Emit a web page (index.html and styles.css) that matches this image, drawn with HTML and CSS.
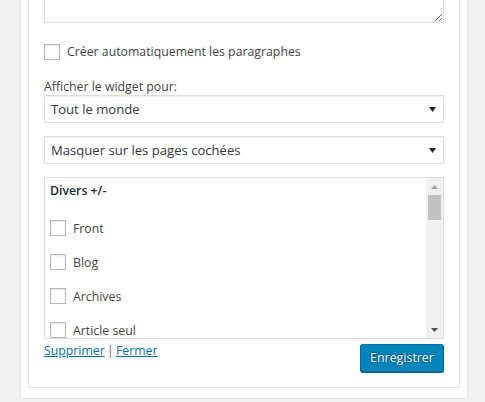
FILE: index.html
```html
<!DOCTYPE html>
<html lang="fr">
<head>
<meta charset="utf-8">
<title>Widget</title>
<link rel="stylesheet" href="styles.css">
</head>
<body>
<div class="page">
  <div class="widget">
    <div class="inside">
      <textarea class="content-area"></textarea>
      <label class="check-row">
        <span class="checkbox"></span>
        <span class="check-label">Créer automatiquement les paragraphes</span>
      </label>
      <div class="field-label">Afficher le widget pour:</div>
      <div class="select">
        <span>Tout le monde</span>
        <svg class="arrow" width="7" height="5" viewBox="0 0 7 5"><polygon points="0,0 7,0 3.5,5" fill="#222"/></svg>
      </div>
      <div class="select select-gap">
        <span>Masquer sur les pages cochées</span>
        <svg class="arrow" width="7" height="5" viewBox="0 0 7 5"><polygon points="0,0 7,0 3.5,5" fill="#222"/></svg>
      </div>
      <div class="list">
        <div class="list-body">
          <div class="list-heading">Divers +/-</div>
          <label class="list-item"><span class="checkbox"></span><span>Front</span></label>
          <label class="list-item"><span class="checkbox"></span><span>Blog</span></label>
          <label class="list-item"><span class="checkbox"></span><span>Archives</span></label>
          <label class="list-item"><span class="checkbox"></span><span>Article seul</span></label>
        </div>
        <div class="scrollbar">
          <div class="sb-button">
            <svg width="7" height="4" viewBox="0 0 7 4"><polygon points="0,4 7,4 3.5,0" fill="#a3a3a3"/></svg>
          </div>
          <div class="sb-track"><div class="sb-thumb"></div></div>
          <div class="sb-button">
            <svg width="7" height="4" viewBox="0 0 7 4"><polygon points="0,0 7,0 3.5,4" fill="#505050"/></svg>
          </div>
        </div>
      </div>
      <div class="actions">
        <div class="links"><a href="#">Supprimer</a> <span class="sep">|</span> <a href="#">Fermer</a></div>
        <button class="button-primary" type="button">Enregistrer</button>
      </div>
    </div>
  </div>
</div>
</body>
</html>
```

FILE: styles.css
```css
* { box-sizing: border-box; }

html, body {
  margin: 0;
  padding: 0;
  background: #f1f1f1;
}

body {
  font-family: "Open Sans", "Noto Sans", sans-serif;
  font-size: 12.3px;
  color: #444;
  overflow: hidden;
}

.page {
  padding: 0 17px 0 20px;
}

.widget {
  width: 448px;
  margin-top: -60px;
  background: #fff;
  border: 1px solid #e5e5e5;
  box-shadow: 0 1px 1px rgba(0, 0, 0, 0.04);
  padding: 0 7px 10px;
}

.inside {
  border: 1px solid #e5e5e5;
  padding: 0 15px 15px;
}

.content-area {
  display: block;
  width: 400px;
  height: 81px;
  margin: 0;
  border: 1px solid #ddd;
  box-shadow: inset 0 1px 2px rgba(0, 0, 0, 0.07);
  resize: vertical;
  background: #fff;
}

.checkbox {
  display: inline-block;
  flex: none;
  width: 16px;
  height: 16px;
  border: 1px solid #b4b9be;
  background: #fff;
  box-shadow: inset 0 1px 2px rgba(0, 0, 0, 0.1);
}

.check-row {
  display: flex;
  align-items: center;
  gap: 7px;
  margin-top: 20px;
  line-height: 18px;
}

.field-label {
  margin-top: 17px;
  line-height: 17px;
}

.select {
  display: flex;
  align-items: center;
  justify-content: space-between;
  height: 28px;
  padding: 0 7px 0 6px;
  border: 1px solid #ddd;
  box-shadow: inset 0 1px 2px rgba(0, 0, 0, 0.07);
  background: #fff;
  color: #32373c;
  font-size: 13.1px;
}

.select-gap {
  margin-top: 13px;
}

.arrow {
  display: block;
  flex: none;
}

.list {
  display: flex;
  margin-top: 13px;
  height: 162px;
  border: 1px solid #ddd;
  background: #fff;
}

.list-body {
  flex: 1;
  overflow: hidden;
  padding: 4px 0 0 5px;
  display: flex;
  flex-direction: column;
  gap: 16px;
}

.list-heading {
  font-weight: 600;
  line-height: 18px;
  color: #23282d;
  margin-bottom: 3px;
}

.list-item {
  display: flex;
  flex: none;
  align-items: center;
  gap: 7px;
  height: 18px;
}

.scrollbar {
  width: 17px;
  flex: none;
  background: #f0f0f0;
  display: flex;
  flex-direction: column;
}

.sb-button {
  height: 17px;
  flex: none;
  display: flex;
  align-items: center;
  justify-content: center;
}

.sb-track {
  flex: 1;
  padding: 0 2px;
}

.sb-thumb {
  height: 25px;
  background: #c1c1c1;
}

.actions {
  display: flex;
  justify-content: space-between;
  align-items: flex-start;
  margin-top: 4px;
}

.links {
  line-height: 16px;
  word-spacing: -1px;
}

.links a {
  color: #0073aa;
  text-decoration: underline;
}

.sep {
  color: #7a5a88;
}

.button-primary {
  margin-top: 1px;
  width: 84px;
  height: 28px;
  padding: 0 0 1px;
  font-family: inherit;
  font-size: 12.4px;
  color: #fff;
  background: #0085ba;
  border: 1px solid #0073aa;
  border-color: #0073aa #006799 #006799;
  border-radius: 3px;
  box-shadow: 0 1px 0 #006799;
  text-shadow: 0 -1px 1px #006799, 1px 0 1px #006799, 0 1px 1px #006799, -1px 0 1px #006799;
  cursor: pointer;
}
```
